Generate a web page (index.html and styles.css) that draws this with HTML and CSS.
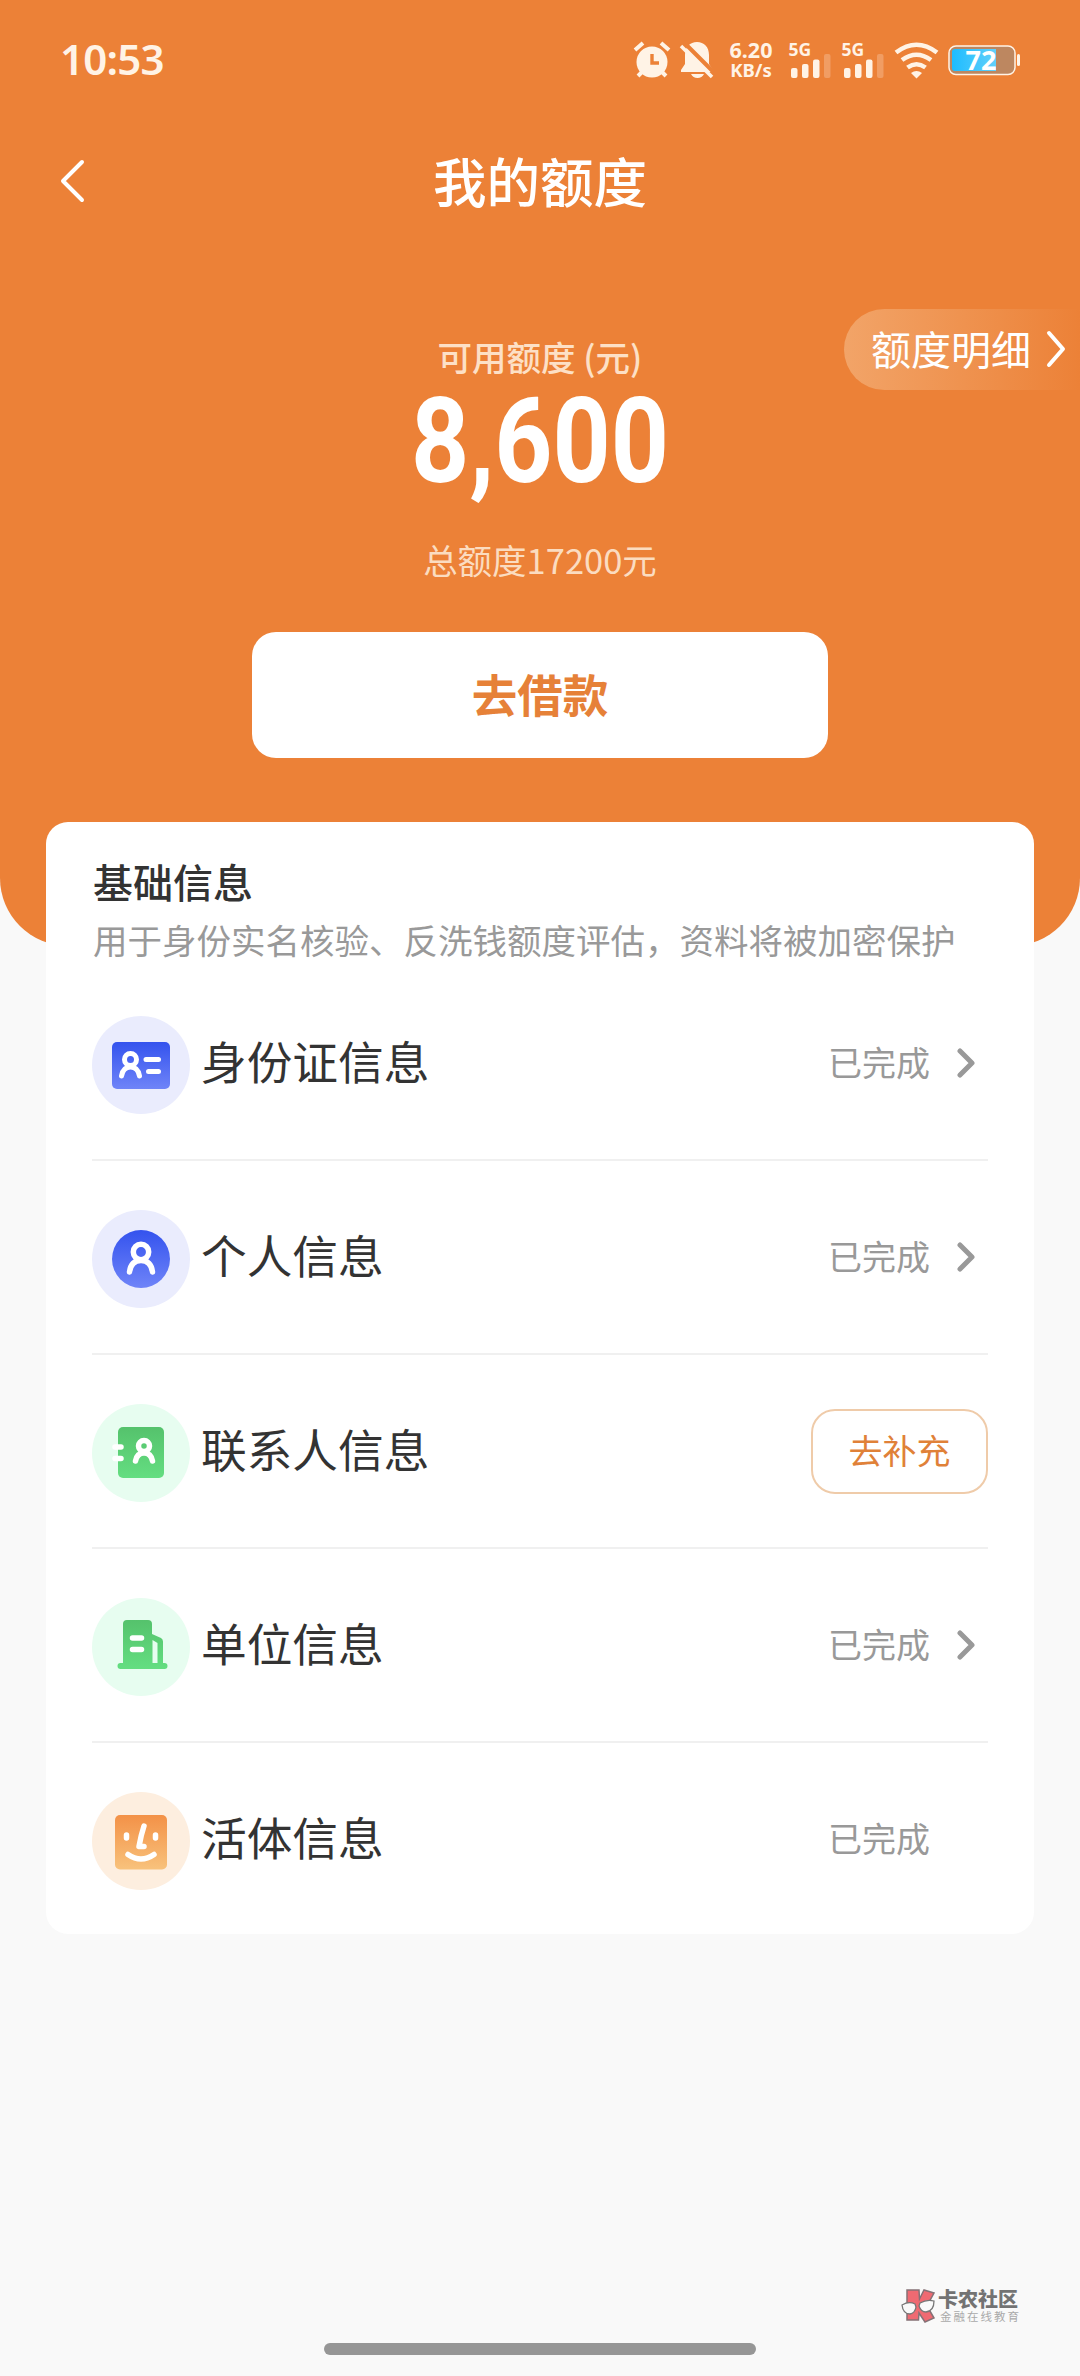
FILE: index.html
```html
<!DOCTYPE html>
<html lang="zh-CN">
<head>
<meta charset="utf-8">
<title>我的额度</title>
<link rel="stylesheet" href="styles.css">
</head>
<body>
<svg class="defs" width="0" height="0" aria-hidden="true">
  <defs>
    <linearGradient id="blue" x1="0" y1="0" x2="0" y2="1"><stop offset="0" stop-color="#3453ee"/><stop offset="1" stop-color="#6f84f8"/></linearGradient>
    <linearGradient id="green" x1="0" y1="0" x2="0" y2="1"><stop offset="0" stop-color="#55c26c"/><stop offset="1" stop-color="#64de81"/></linearGradient>
    <linearGradient id="orange" x1="0" y1="0" x2="0" y2="1"><stop offset="0" stop-color="#f39147"/><stop offset="1" stop-color="#f8c27c"/></linearGradient>
    <linearGradient id="charge" x1="0" y1="0" x2="1" y2="0"><stop offset="0" stop-color="#1ebcff"/><stop offset="1" stop-color="#62d0fa"/></linearGradient>
  </defs>
</svg>
<header class="hero">
  <div class="status">
    <span class="clock">10:53</span>
    <span class="net"><b>6.20</b><b>KB/s</b></span>
    <svg class="status-icons" viewBox="0 0 400 60" fill="#fff3e6">
      <g>
        <circle cx="22" cy="32" r="15.5"/>
        <path d="M5 20l8-7M39 20l-8-7M8 46l6-6M36 46l-6-6" fill="none" stroke="#fff3e6" stroke-width="4"/>
        <path d="M22 24v9h7" fill="none" stroke="#ec8137" stroke-width="3.4"/>
      </g>
      <path d="M51 42v-2l4-6V25c0-8 5-13 12-13s12 5 12 13v9l4 6v2zM61 44h13q-2 4-6.500 4t-6.500-4z"/>
      <path d="M53.500 12l34 34" stroke="#ec8137" stroke-width="4"/>
      <path d="M51 16l31 31" stroke="#fff3e6" stroke-width="3.500"/>
      <g id="bars"><rect x="161" y="38" width="6.500" height="10" rx="2"/><rect x="172" y="34" width="6.500" height="14" rx="2"/><rect x="183" y="29.500" width="6.500" height="18.500" rx="2"/><rect x="194" y="24" width="6.500" height="24" rx="2" opacity=".25"/></g>
      <use href="#bars" x="53"/>
      <g fill="none" stroke="#fff3e6" stroke-width="4.600"><path d="M266 22.500q20.500-15.500 41 0M272 30q14.500-10.500 29 0M277.500 37.500q9-6.500 18 0"/></g>
      <path d="M281 43q5.500-4 11 0l-5.500 5.500z"/>
      <rect x="319" y="16" width="66" height="28.500" rx="7" fill="#bd8760" stroke="#fff3e6" stroke-width="1.500"/>
      <path d="M325 19h41v22h-41q-3 0-3-3V22q0-3 3-3z" fill="url(#charge)"/>
      <rect x="387" y="24" width="3" height="12" rx="1.500"/>
      <text class="sig" x="158.500" y="25.500">5G</text><text class="sig" x="211.500" y="25.500">5G</text>
      <text class="pct" x="351" y="40" text-anchor="middle">72</text>
    </svg>
  </div>
  <nav class="nav">
    <svg class="back" viewBox="0 0 26 44"><path d="M23 3L4 22l19 19"/></svg>
    <h1>我的额度</h1>
  </nav>
  <section class="quota">
    <a class="detail"><span>额度明细</span><svg viewBox="0 0 20 38"><path d="M3 3l14 16L3 35"/></svg></a>
    <p class="label">可用额度 (元)</p>
    <p class="amount">8,600</p>
    <p class="total">总额度17200元</p>
    <button class="borrow">去借款</button>
  </section>
</header>
<main class="card">
  <h2>基础信息</h2>
  <p class="hint">用于身份实名核验、反洗钱额度评估，资料将被加密保护</p>
  <ul class="list">
    <li>
      <svg class="ico" viewBox="0 0 98 98"><circle cx="49" cy="49" r="49" fill="#eaecfd"/><rect x="20" y="26" width="58" height="47" rx="5" fill="url(#blue)"/><g fill="none" stroke="#fff" stroke-width="5" stroke-linecap="round"><circle cx="38.500" cy="43.500" r="6"/><path d="M29.500 60Q31 51 38.500 51T47.500 60M54 43.500h12.500M56.500 55.500h10"/></g></svg>
      <span class="name">身份证信息</span><span class="state">已完成</span><svg class="go" viewBox="0 0 20 30"><path d="M4 3l12 12L4 27"/></svg>
    </li>
    <li>
      <svg class="ico" viewBox="0 0 98 98"><circle cx="49" cy="49" r="49" fill="#eaecfd"/><circle cx="49" cy="49" r="29" fill="url(#blue)"/><g fill="none" stroke="#fff" stroke-width="5.500" stroke-linecap="round"><circle cx="49" cy="42" r="7.700"/><path d="M37.500 62Q39 50.500 49 50.500T60.500 62"/></g></svg>
      <span class="name">个人信息</span><span class="state">已完成</span><svg class="go" viewBox="0 0 20 30"><path d="M4 3l12 12L4 27"/></svg>
    </li>
    <li>
      <svg class="ico" viewBox="0 0 98 98"><circle cx="49" cy="49" r="49" fill="#e7fdf0"/><rect x="26" y="23" width="46" height="51" rx="5" fill="url(#green)"/><g fill="none" stroke="#fff" stroke-width="5.500" stroke-linecap="round"><circle cx="52" cy="42" r="5.500"/><path d="M43.500 57Q45 49 52 49T60.500 57M23 43h6M23 54.500h6"/></g></svg>
      <span class="name">联系人信息</span><button class="fill">去补充</button>
    </li>
    <li>
      <svg class="ico" viewBox="0 0 98 98"><circle cx="49" cy="49" r="49" fill="#e7fdf0"/><path d="M35 22h21q4 0 4 4v10l9 4q2 1 2 3.500V65h1.500a3 3 0 0 1 0 6h-44a3 3 0 0 1 0-6H31V26q0-4 4-4zM60.500 42v23h5V45z" fill="url(#green)" fill-rule="evenodd"/><path d="M40.500 40h9M40.500 51.500h9" stroke="#fff" stroke-width="5.500" stroke-linecap="round"/></svg>
      <span class="name">单位信息</span><span class="state">已完成</span><svg class="go" viewBox="0 0 20 30"><path d="M4 3l12 12L4 27"/></svg>
    </li>
    <li>
      <svg class="ico" viewBox="0 0 98 98"><circle cx="49" cy="49" r="49" fill="#fdeedf"/><rect x="23" y="23" width="52" height="54.500" rx="5" fill="url(#orange)"/><g fill="none" stroke="#fff" stroke-width="5.500" stroke-linecap="round" stroke-linejoin="round"><path d="M34.500 43v3M63.500 43v3M52 34Q49 43 47 54.500h5M36 62.500Q49 71.500 62 62.500"/></g></svg>
      <span class="name">活体信息</span><span class="state last">已完成</span>
    </li>
  </ul>
</main>
<div class="watermark">
  <svg viewBox="0 0 36 36"><path d="M7 2h12l.5 9L24 2l10 3-7 13 7 12-9 4-6-9-.5 7H7z" fill="#ef6a72" stroke="#857176" stroke-width="1.500"/><path d="M2 17q7-4 13-1l1 3q-1 6-6 7-7 0-8-9zM19 18l1-3q7-4 14-2 0 10-8 11-5 0-7-6z" fill="#fafafa" stroke="#777" stroke-width="1.300"/></svg>
  <div><b>卡农社区</b><small>金融在线教育</small></div>
</div>
<div class="home"></div>
</body>
</html>
```
FILE: styles.css
```css
* { box-sizing: border-box; margin: 0; padding: 0; }
body {
  width: 1080px; height: 2376px; overflow: hidden; position: relative;
  background: #f9f9f9; color: #333;
  font-family: "Noto Sans", "Noto Sans CJK SC", sans-serif;
}
button { font: inherit; background: #fff; border: 0; }
.defs { position: absolute; }
.hero { height: 946px; background: #ec8137; border-radius: 0 0 68px 68px; color: #fff; }

.status { height: 120px; position: relative; display: flex; justify-content: space-between; padding: 30px 50px 0 60px; color: #fff3e6; }
.clock { font-size: 42px; font-weight: 600; line-height: 58px; letter-spacing: -.8px; }
.status-icons { width: 400px; height: 60px; }
.net { position: absolute; left: 726px; top: 40px; width: 50px; display: flex; flex-direction: column; align-items: center; }
.net b { font-size: 21.500px; line-height: 20px; font-weight: 700; }
.net b + b { font-size: 18.500px; }
.sig { font: 700 17.500px "Noto Sans", sans-serif; }
.pct { font: 700 27px "Noto Sans", sans-serif; fill: #fff; }

.nav { height: 124px; padding-bottom: 4px; display: flex; align-items: center; justify-content: center; position: relative; }
.back { position: absolute; left: 59px; top: 39px; width: 26px; height: 44px; }
.back path, .detail path { fill: none; stroke: #fff; stroke-width: 4; stroke-linecap: round; stroke-linejoin: round; }
h1 { font: 500 53.500px/80px "Noto Sans CJK SC", sans-serif; }

.quota { position: relative; display: flex; flex-direction: column; align-items: center; padding-top: 87px; font-family: "Noto Sans CJK SC", sans-serif; }
.detail { position: absolute; right: 0; top: 65px; width: 236px; height: 81px; padding: 0 14px 4px 27px; display: flex; align-items: center; justify-content: space-between; border-radius: 41px 0 0 41px; background: linear-gradient(90deg, #f2a468, #ec8137); font-size: 40px; }
.detail svg { width: 20px; height: 38px; margin-top: 2px; }
.label { font-size: 34.500px; line-height: 50px; font-weight: 500; color: #fde0c6; }
.amount { margin-top: 2px; font: 700 118px/118px Roboto, sans-serif; transform: scaleX(.86); }
.total { margin-top: 32px; font-size: 34.500px; line-height: 52px; color: #fbdcc0; }
.borrow { margin-top: 47px; padding-bottom: 5px; width: 576px; height: 126px; border-radius: 24px; color: #e68138; font-size: 45.500px; font-weight: 700; }

.card { position: relative; margin: -124px 46px 0; height: 1112px; padding: 29px 46px 0; background: #fff; border-radius: 22px; font-family: "Noto Sans CJK SC", sans-serif; }
h2 { margin-left: 1px; font-size: 40px; line-height: 60px; font-weight: 500; }
.hint { margin-left: 1px; font-size: 34.500px; line-height: 56px; color: #999; white-space: nowrap; }
.list { list-style: none; }
.list li { height: 194px; display: flex; align-items: center; border-bottom: 2px solid #f0f0f0; }
.list li:last-child { border-color: transparent; }
.ico { width: 98px; height: 98px; margin-top: 3px; }
.name { flex: 1; margin-left: 11px; padding-bottom: 6px; font-size: 45.700px; }
.state { margin-right: 26px; padding-bottom: 4px; font-size: 34px; color: #999; }
.state.last { margin-right: 58px; }
.go { width: 20px; height: 30px; margin-right: 12px; }
.go path { fill: none; stroke: #999; stroke-width: 5; stroke-linecap: round; stroke-linejoin: round; }
.fill { width: 177px; height: 85px; padding-bottom: 4px; border: 2px solid #efcba9; border-radius: 24px; color: #e08138; font-size: 34px; }

.watermark { position: absolute; left: 900px; top: 2288px; display: flex; gap: 2px; font-family: "Noto Sans CJK SC", sans-serif; color: #737373; }
.watermark svg { width: 36px; height: 36px; }
.watermark div { display: flex; flex-direction: column; }
.watermark b { font-size: 20px; line-height: 22px; font-weight: 900; }
.watermark small { margin-left: 2px; font-size: 11.500px; line-height: 13px; letter-spacing: 2px; color: #aaa; }
.home { position: absolute; left: 324px; top: 2343px; width: 432px; height: 12px; border-radius: 6px; background: #969696; }
```
